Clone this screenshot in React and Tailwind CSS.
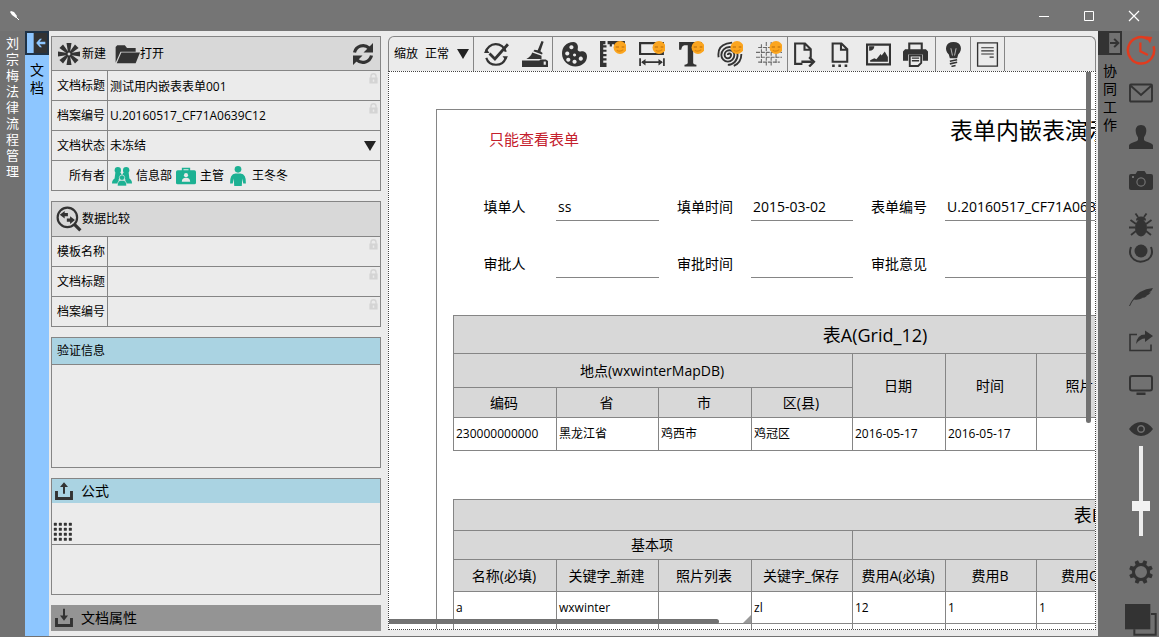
import React from 'react';

const svg = (size, children, cls = 'text-[#333]') => (
  <svg width={size} height={size} viewBox="0 0 24 24" fill="currentColor" className={`shrink-0 ${cls}`} aria-hidden="true">
    {children}
  </svg>
);
const line = { fill: 'none', stroke: 'currentColor', strokeWidth: 2 };

const Smile = () => (
  <g>
    <circle cx="18.5" cy="6" r="6" fill="#fba51f" />
    <path d="M14.500 5.500h3M20 5.500h2.500" stroke="#b56a0c" strokeWidth="1" />
    <path d="M15.500 8.500q3 2 6-.5" fill="none" stroke="#d9860f" strokeWidth="1" />
  </g>
);

const Star = () => svg(24, [0, 45, 90, 135, 180, 225, 270, 315].map((a) => (
  <path key={a} d="M11 10.500L9.500 1h5L13 10.500z" transform={`rotate(${a} 12 12)`} />
)));
const Folder = () => svg(26, <path d="M1.500 20V5.500L3 4h7l2 2.500h8V10H6zM2.500 20.500L6.800 10.700H24L20 20.500z" />);
const Refresh = () => svg(24, (
  <g>
    <path d="M3.500 10.500A8.800 8.800 0 0 1 18 6M20.500 13.500A8.800 8.800 0 0 1 6 18" fill="none" stroke="currentColor" strokeWidth="3.200" />
    <path d="M22 1v9.500h-9.500zM2 23v-9.500h9.500z" />
  </g>
));
const Compare = () => svg(26, (
  <g>
    <circle cx="10.500" cy="10.500" r="9" {...line} />
    <path d="M17 17l5.500 5.500" {...line} strokeWidth="3" />
    <path d="M3.500 8l4.500-3.500v2h3v3H8v2zM17.500 13l-4.500-3.500v2h-3v3h3v2z" />
  </g>
));
const Tray = ({ down }) => svg(20, (
  <g>
    <path d="M3 12v9h18v-9" {...line} strokeWidth="3.500" />
    {down ? <path d="M10.500 1h3v9H18l-6 7-6-7h4.500z" transform="translate(2.400 0) scale(.8 .9)" /> : <path d="M10.500 16h3V7H18l-6-6.500L6 7h4.500z" transform="translate(2.400 1) scale(.8 .9)" />}
  </g>
));
const Dots = () => svg(20, [1, 7, 13, 19].map((y) => [1, 7, 13, 19].map((x) => <rect key={`${x}-${y}`} x={x} y={y} width="3.600" height="3.600" rx=".8" />)));
const Lock = () => svg(11, <path d="M3 10h2V7a7 7 0 0 1 14 0v3h2v13H3zM8 10h8V7a4 4 0 0 0-8 0zM10.500 14v5h3v-5z" fillRule="evenodd" />, 'mt-0.5 mr-px text-[#d4d4d4]');

const green = 'text-[#1cb193]';
const Team = () => svg(20, (
  <g>
    <circle cx="7" cy="5" r="3.800" /><circle cx="17" cy="5" r="3.800" />
    <path d="M4 8h6.500L12 11l1.500-3H20l1 8h-5l-1-2H9l-1 2H3z" />
    <path d="M0 21q0-5 4-6h4v6zM24 21q0-5-4-6h-4v6z" />
    <path d="M6.500 24q-.500-7 5.500-7t5.500 7z" stroke="#e9e9e9" strokeWidth=".8" />
    <circle cx="12" cy="14" r="3.200" stroke="#e9e9e9" strokeWidth=".8" />
  </g>
), green);
const Badge = () => svg(20, (
  <g>
    <rect x="0" y="5" width="24" height="17" rx="2" />
    <path d="M8 6V3h8v3" {...line} />
    <circle cx="12" cy="11" r="2.500" fill="#e9e9e9" />
    <path d="M7 19q0-5 5-5t5 5z" fill="#e9e9e9" />
  </g>
), green);
const Person = () => svg(20, (
  <g>
    <circle cx="12" cy="4" r="4" />
    <path d="M2.500 21q-.500-11.500 6.500-12h6q7 .500 6.500 12h-3.200l-1.100-6-.700 9h-9l-.700-9-1.100 6z" />
  </g>
), green);

const Check = () => svg(26, (
  <g>
    <path d="M21 9.500a9.500 9.500 0 0 0-18.500.500M3 15a9.500 9.500 0 0 0 18 0" {...line} transform="translate(0 .500)" />
    <path d="M1 11h5l-3-4zM23 14h-5l3 4z" />
    <path d="M6 11.500l5 5L23 3" {...line} strokeWidth="2.600" />
  </g>
));
const Broom = () => svg(26, (
  <g>
    <path d="M18 0l2 .800L17 9.500l2 1.500-.500 1.500-8-3 1-1.500 3 .500zM9.500 10.500l8.500 3v3H4q4-2 5.500-6zM0 18h16l1-1h5l2 1.500V24H0zM20 19v3h2v-3z" fillRule="evenodd" />
  </g>
));
const Palette = () => svg(25, (
  <path fillRule="evenodd" d="M11 0C4 0 0 5 0 11c0 7 6 12.500 13 12.500 6 0 11-4 11-9.500 0-4-3-5.500-6-5-2 .300-3-.500-3-2 1-3-.500-7-4-7zM9 3a2 2 0 1 0 .1 0zM5 9a2 2 0 1 0 .1 0zM6 15a2 2 0 1 0 .1 0zM12 17a2 2 0 1 0 .1 0zM18 14a2 2 0 1 0 .1 0zM12 11a1.500 1.500 0 1 0 .1 0z" />
));
const Ruler = () => svg(26, (
  <g>
    <path d="M0 0h5v3H3v1h3v2H3v2h3v2H3v2h3v2H3v2h3v2H3v2h3v4H0z" />
    <path d="M7 0h16v6h-2V3h-2v3h-2V3h-2v3h-2V3h-2v2H9V3H7z" />
    <Smile />
  </g>
));
const Width = () => svg(26, (
  <g>
    <path d="M1 2h21v10H1z" {...line} />
    <path d="M1 16v7M23 16v7M3 19.500h18" {...line} strokeWidth="1.600" />
    <path d="M2 19.500l4-3v6zM22 19.500l-4-3v6z" />
    <Smile />
  </g>
));
const TypeT = () => svg(26, (
  <g><path d="M1 1h21v7h-2q-.500-3.500-3-4h-3v16q0 1.500 3 2v1.500H6V22q3-.500 3-2V4H6Q3.500 4.500 3 8H1z" /><Smile /></g>
));
const Spiral = () => svg(26, (
  <g>
    <path d="M10 13a1.500 1.500 0 0 1 3 0a3 3 0 0 1-6 0a4.500 4.500 0 0 1 9 0a6 6 0 0 1-12 0a7.500 7.500 0 0 1 15 0a9 9 0 0 1-9 9M1.500 15Q0 5 9 2.500l5-1M22.500 12q0 8-7 11" {...line} strokeWidth="1.700" />
    <Smile />
  </g>
));
const Mesh = () => svg(26, (
  <g>
    <path d="M5 3v18M9.500 1v22M14 1v22M18.500 3v18M2 6h20M0 10.500h24M0 15h24M2 19.500h20" stroke="#6b6b6b" strokeWidth="1" strokeDasharray="3.700 .8" fill="none" />
    <Smile />
  </g>
));
const DocArrow = () => svg(25, (
  <g>
    <path d="M10 21H3V1.500h9.500L18 7v8M12 2v5.500h6" {...line} />
    <path d="M9 19h10M16.500 14.500l4.500 4.500-4.500 4.500" {...line} strokeWidth="2.300" />
  </g>
));
const DocDots = () => svg(25, (
  <g>
    <path d="M3.500 19V1.500H12L17.500 7v12zM11.500 2v5.500h6" {...line} />
    <path d="M3 21.500h2.500V24H3zM9 21.500h2.500V24H9zM15 21.500h2.500V24H15z" />
  </g>
));
const Picture = () => svg(25, (
  <g>
    <path d="M1 2.500h22v19H1z" {...line} />
    <path d="M4 19v-1.500l4-2 2 1 4-5 1 1.500 3-4 3 5.500V19zM3 4h5q0 4-5 4.500z" />
  </g>
));
const Printer = () => svg(25, (
  <g>
    <path d="M6 8V1.500h12V8" {...line} />
    <path d="M2 7h20l2 2v9h-5v-6H5v6H0V9z" />
    <path d="M6.500 13h11v7l-3 3h-8z" {...line} strokeWidth="1.800" />
    <path d="M8.500 15.500h7M8.500 18h7" {...line} strokeWidth="1.300" />
  </g>
));
const Bulb = () => svg(25, (
  <g>
    <path d="M12 0c8 0 9 8 4.500 12l-1 3.500h-7l-1-3.500C3 8 4 0 12 0z" />
    <path d="M9.500 6l1.500 7M14.500 6L13 13" fill="none" stroke="#bbb" strokeWidth=".9" />
    <path d="M8.500 18.500l7-1.500M8.500 21l7-1.500M10 23.500l4-1" {...line} strokeWidth="1.500" />
  </g>
));
const Note = () => svg(25, (
  <g>
    <path d="M2.500 .800h19v22.400h-19z" {...line} strokeWidth="1.300" />
    <path d="M6 5.500h12M6 8.500h12M6 11.500h12M14 14.500h4" {...line} strokeWidth="1.100" />
  </g>
));

const Clock = () => svg(30, (
  <g>
    <path d="M17.500 3.300A10.500 10.500 0 1 0 22 9" {...line} strokeWidth="2" />
    <path d="M15.500 1l5.500.500-1.800 5z" />
    <path d="M11.500 6v7l6 3" {...line} strokeWidth="1.800" />
  </g>
), 'text-[#e23b1e]');
const Mail = () => svg(24, <path d="M1 4.500q0-1 1-1h20q1 0 1 1v15q0 1-1 1H2q-1 0-1-1zM2 5l10 9L22 5" {...line} strokeWidth="1.900" />);
const User = () => svg(24, <path d="M12 0c4 0 5.500 3 5.300 6-.3 4-1.800 5-2.300 6.500V15q.500 1 5 2.500 4 1.500 4 3V24H0v-3.500q0-1.500 4-3Q8.500 16 9 15v-2.500C8.500 11 7 10 6.700 6 6.500 3 8 0 12 0z" />);
const Camera = () => svg(24, (
  <g>
    <path fillRule="evenodd" d="M2 5h4.500l2-3h7l2 3H22q2 0 2 2v12q0 2-2 2H2q-2 0-2-2V7q0-2 2-2zM12 8.300a4.700 4.700 0 1 0 .1 0zM3 7v2h2V7z" />
    <circle cx="12" cy="13" r="3.500" />
  </g>
));
const Bug = () => svg(24, (
  <g>
    <ellipse cx="12" cy="15" rx="6" ry="8.500" /><path d="M7 7.500q0-4 5-4t5 4z" />
    <path d="M9 4L6.500 .500M15 4l2.500-3.500M7 11L1.500 7M17 11l5.500-4M6 14.500H0M18 14.500h6M7 18l-5 4M17 18l5 4" {...line} strokeWidth="1.800" />
  </g>
));
const Radio = () => svg(24, (
  <g>
    <circle cx="12" cy="10" r="6.500" />
    <path d="M2 6q-3 8 3 12.500t14 0q6-4.500 3-12.500" {...line} />
  </g>
));
const Quill = () => svg(24, <path d="M0 21Q4 12 11 7 17 3.500 24 3q-1 3-4 4.500h2q-2 2.500-5.500 3h2Q16 13 12 13h1.500q-4 2.500-8.500 1.500Q2.500 17 1 21z" />);
const Share = () => svg(24, (
  <g>
    <path d="M8 5.500H1v16h21v-6" {...line} strokeWidth="1.600" />
    <path d="M7 15q1-9.500 9-9.500V1.500L24 7l-8 6V9.500q-5 0-9 5.500z" />
  </g>
));
const Monitor = () => svg(24, (
  <g>
    <rect x="1" y="3" width="22" height="14.500" rx="2" {...line} />
    <path d="M7.500 19.500h9V22h-9z" />
  </g>
));
const Eye = () => svg(24, (
  <g>
    <path fillRule="evenodd" d="M0 12Q5 5 12 5t12 7q-5 7-12 7T0 12zM12 8a4 4 0 1 0 .1 0z" />
    <circle cx="12" cy="12" r="2.500" />
  </g>
));
const Gear = () => svg(24, (
  <g>
    <circle cx="12" cy="12" r="7.500" {...line} strokeWidth="3" />
    {[22, 67, 112, 157, 202, 247, 292, 337].map((a) => <path key={a} d="M9.700 4L10.200 0h3.600l.500 4z" transform={`rotate(${a} 12 12)`} />)}
  </g>
));
const Squares = () => svg(32, (
  <g>
    <path d="M7 19v4h16V7.500h-3.500" {...line} strokeWidth="1.500" />
    <path d="M0 0h19v19H0z" />
  </g>
));
const PanelArrow = ({ left }) => svg(20, left ? (
  <path fillRule="evenodd" d="M8 0h16v24H8zM22 10.500h-7l3-3.500h-2.500L11 12l4.500 5H18l-3-3.500h7z" />
) : (
  <g><path d="M0 0h11v24H0z" /><path d="M12 12h9M17 7l5 5-5 5" {...line} strokeWidth="2.400" /></g>
));

const Label = ({ htmlFor, children }) => (
  <label htmlFor={htmlFor} className="flex w-[55px] items-center justify-end pr-0.5">{children}</label>
);
function FieldRow({ id, label, value = '' }) {
  return (
    <div className="flex h-[30px] border-t border-[#858585]">
      <Label htmlFor={id}>{label}</Label>
      <div className="flex min-w-0 flex-1 items-start border-l border-[#858585]">
        <input id={id} defaultValue={value} readOnly className="h-full min-w-0 flex-1 bg-transparent pl-0.5 outline-none" />
        <Lock />
      </div>
    </div>
  );
}

function LeftPanel() {
  return (
    <aside className="flex w-[339px] shrink-0 flex-col gap-2.5 pt-[5px] pr-[7px] pl-0.5 text-xs">
      <section className="border border-[#858585]">
        <div className="flex h-[33px] items-center bg-[#d8d8d8] pr-[5px] pl-[5px]">
          <button className="flex items-center gap-px"><Star />新建</button>
          <button className="ml-2 flex items-center"><Folder />打开</button>
          <button className="ml-auto" aria-label="刷新"><Refresh /></button>
        </div>
        <FieldRow id="title" label="文档标题" value="测试用内嵌表表单001" />
        <FieldRow id="number" label="档案编号" value="U.20160517_CF71A0639C12" />
        <div className="flex h-[30px] border-t border-[#858585]">
          <Label htmlFor="state">文档状态</Label>
          <div className="relative flex flex-1 items-center border-l border-[#858585]">
            <select id="state" className="h-full w-full appearance-none bg-transparent pl-0.5 outline-none"><option>未冻结</option></select>
            <svg width="12" height="10" viewBox="0 0 12 10" className="pointer-events-none absolute right-1"><path d="M0 0h12L6 10z" fill="#222" /></svg>
          </div>
        </div>
        <div className="flex h-[30px] border-t border-[#858585]">
          <div className="flex w-[55px] items-center justify-end pr-0.5">所有者</div>
          <div className="flex flex-1 items-center gap-1 border-l border-[#858585] pl-1">
            <Team /><span>信息部</span><Badge /><span>主管</span><Person /><span>王冬冬</span>
          </div>
        </div>
      </section>

      <section className="border border-[#858585]">
        <button className="flex h-[34px] w-full items-center bg-[#d8d8d8] pl-1"><Compare />数据比较</button>
        <FieldRow id="tpl" label="模板名称" />
        <FieldRow id="title2" label="文档标题" />
        <FieldRow id="number2" label="档案编号" />
      </section>

      <section className="border border-[#858585]">
        <h2 className="flex h-[26px] items-center bg-[#aad3e2] pl-[5px]">验证信息</h2>
        <div className="h-[103px] border-t border-[#858585]" />
      </section>

      <section className="border border-[#858585]">
        <h2 className="flex h-6 items-center gap-[7px] bg-[#aad3e2] pl-0.5 text-sm"><Tray />公式</h2>
        <div className="flex h-[41px] items-end pb-0.5 pl-px"><button aria-label="公式列表"><Dots /></button></div>
        <div className="h-[50px] border-t border-[#858585]" />
      </section>

      <section className="shrink-0">
        <button className="flex h-[26px] w-full items-center gap-[7px] bg-[#949494] pl-[3px] text-sm"><Tray down />文档属性</button>
      </section>
    </aside>
  );
}

const Tool = ({ label, icon: Icon }) => (
  <button aria-label={label} title={label} className="flex items-center justify-center"><Icon /></button>
);
function Toolbar() {
  return (
    <div className="flex h-[35px] shrink-0 rounded-t-md border border-b-0 border-[#858585] text-xs">
      <div className="relative flex w-[85px] items-center border-r border-[#858585] pl-[5px]">
        <label htmlFor="zoom" className="w-[31px] shrink-0">缩放</label>
        <select id="zoom" className="h-full w-full appearance-none bg-transparent outline-none"><option>正常</option></select>
        <svg width="12" height="10" viewBox="0 0 12 10" className="pointer-events-none absolute right-1"><path d="M0 0h12L6 10z" fill="#222" /></svg>
      </div>
      <div className="flex w-[79px] items-center gap-[13px] border-r border-[#858585] pl-[9px]">
        <Tool label="检查" icon={Check} /><Tool label="清理" icon={Broom} />
      </div>
      <div className="flex w-[235px] items-center gap-[13px] border-r border-[#858585] pl-[9px]">
        <Tool label="颜色" icon={Palette} /><Tool label="标尺" icon={Ruler} /><Tool label="宽度" icon={Width} />
        <Tool label="文字" icon={TypeT} /><Tool label="螺旋" icon={Spiral} /><Tool label="网格" icon={Mesh} />
      </div>
      <div className="flex w-[148px] items-center gap-3 border-r border-[#858585] pl-1">
        <Tool label="导出" icon={DocArrow} /><Tool label="文件" icon={DocDots} /><Tool label="图片" icon={Picture} /><Tool label="打印" icon={Printer} />
      </div>
      <div className="flex w-[35px] items-center justify-center border-r border-[#858585]"><Tool label="提示" icon={Bulb} /></div>
      <div className="flex w-[34px] items-center justify-center border-r border-[#858585]"><Tool label="便笺" icon={Note} /></div>
    </div>
  );
}

function FormField({ id, label, value = '' }) {
  return (
    <>
      <label htmlFor={id} className="text-center leading-7">{label}</label>
      <input id={id} defaultValue={value} className="h-7 w-full border-b border-[#858585] bg-transparent pl-0.5 outline-none" />
    </>
  );
}
const Cols = ({ last }) => (
  <colgroup>
    <col className="w-[103px]" /><col className="w-[102px]" /><col className="w-[93px]" /><col className="w-[101px]" />
    <col className="w-[93px]" /><col className="w-[91px]" /><col className="w-[88px]" /><col className={last} />
  </colgroup>
);
const Th = ({ children, className = '', ...rest }) => (
  <th className={`border border-[#858585] p-0 pr-0.5 font-normal ${className}`} {...rest}>{children}</th>
);
const Td = ({ children }) => <td className="relative border border-[#858585] bg-white p-0 pl-0.5 text-xs">{children}</td>;

function FormPage() {
  return (
    <div className="mt-[37px] ml-[47px] min-h-[1000px] w-[1420px] border-t border-l border-[#858585] pl-4 text-sm">
      <div className="flex h-[78px] items-start">
        <p className="w-[497px] pt-[19px] pl-9 text-[15px] leading-5 text-[#c4202c]">只能查看表单</p>
        <h1 className="pt-1 text-[23px] leading-8">表单内嵌表演示</h1>
      </div>
      <div className="grid h-[90px] grid-cols-[103px_103px_92px_102px_92px_240px] grid-rows-[33px_57px] items-end">
        <FormField id="f1" label="填单人" value="ss" />
        <FormField id="f2" label="填单时间" value="2015-03-02" />
        <FormField id="f3" label="表单编号" value="U.20160517_CF71A0639C12" />
        <FormField id="f4" label="审批人" />
        <FormField id="f5" label="审批时间" />
        <FormField id="f6" label="审批意见" />
      </div>
      <table className="mt-[37px] w-[845px] table-fixed border-collapse">
        <Cols last="w-[174px]" />
        <thead className="bg-[#d8d8d8]">
          <tr className="h-[38px]"><Th colSpan={8} className="text-lg">表A(Grid_12)</Th></tr>
          <tr className="h-[34px]">
            <Th colSpan={4}>地点(wxwinterMapDB)</Th>
            <Th rowSpan={2}>日期</Th><Th rowSpan={2}>时间</Th><Th rowSpan={2}>照片</Th><Th rowSpan={2} />
          </tr>
          <tr className="h-[30px]"><Th>编码</Th><Th>省</Th><Th>市</Th><Th>区(县)</Th></tr>
        </thead>
        <tbody>
          <tr className="h-[33px]">
            <Td>230000000000</Td><Td>黑龙江省</Td><Td>鸡西市</Td><Td>鸡冠区</Td><Td>2016-05-17</Td><Td>2016-05-17</Td><Td /><Td />
          </tr>
        </tbody>
      </table>
      <table className="mt-12 w-[1272px] table-fixed border-collapse">
        <Cols last="w-[601px]" />
        <thead className="bg-[#d8d8d8]">
          <tr className="h-[31px]"><Th colSpan={8} className="text-lg">表B</Th></tr>
          <tr className="h-[29px]"><Th colSpan={4}>基本项</Th><Th colSpan={4} /></tr>
          <tr className="h-8">
            <Th>名称(必填)</Th><Th>关键字_新建</Th><Th>照片列表</Th><Th>关键字_保存</Th><Th>费用A(必填)</Th><Th>费用B</Th><Th>费用C</Th><Th />
          </tr>
        </thead>
        <tbody>
          <tr className="h-8">
            <Td>a</Td><Td>wxwinter</Td>
            <Td><svg width="8" height="8" viewBox="0 0 8 8" className="absolute right-0 bottom-0"><path d="M8 0v8H0z" fill="#999" /></svg></Td>
            <Td>zl</Td><Td>12</Td><Td>1</Td><Td>1</Td><Td />
          </tr>
          <tr className="h-8"><Td /><Td /><Td /><Td /><Td /><Td /><Td /><Td /></tr>
        </tbody>
      </table>
    </div>
  );
}

const vertical = (text) => [...text].map((c, i) => <span key={i} className="block">{c}</span>);

export default function App() {
  return (
    <div className="flex h-screen flex-col overflow-hidden bg-[#717171] font-['Open_Sans','Noto_Sans_CJK_SC',sans-serif] text-black">
      <header className="flex h-[31px] shrink-0 items-center bg-[#757575] pr-[3px] pl-2.5">
        <svg width="10" height="10" viewBox="0 0 10 10"><path d="M1 0l3 1 3 4-1 2-4-3-2-3z" fill="#fff" /><path d="M6 6l3 3" stroke="#fff" /></svg>
        <div className="ml-auto flex">
          <button aria-label="最小化" className="flex h-7 w-[45px] items-center justify-center"><svg width="12" height="12"><path d="M1 6.500h10" stroke="#fff" /></svg></button>
          <button aria-label="最大化" className="flex h-7 w-[45px] items-center justify-center"><svg width="12" height="12"><path d="M1.500 1.500h9v9h-9z" stroke="#fff" fill="none" /></svg></button>
          <button aria-label="关闭" className="flex h-7 w-[45px] items-center justify-center"><svg width="12" height="12"><path d="M1 1l10 10M11 1L1 11" stroke="#fff" strokeWidth="1.200" /></svg></button>
        </div>
      </header>

      <div className="flex min-h-0 flex-1 border-b border-[#717171]">
        <div className="w-[25px] shrink-0 pt-1 text-center text-[13px] leading-4 text-white">{vertical('刘宗梅法律流程管理')}</div>
        <nav className="flex w-6 shrink-0 flex-col items-center bg-[#8dc6ff]">
          <button aria-label="收起" className="flex h-6 w-6 items-center justify-center border-2 border-[#1f3347]"><PanelArrow left /></button>
          <button className="pt-1.5 text-sm leading-[18px]">{vertical('文档')}</button>
        </nav>

        <div className="flex min-w-0 flex-1 bg-[#ebebeb]">
          <LeftPanel />
          <main className="flex min-w-0 flex-1 flex-col pt-[5px] pr-0.5 pb-1.5">
            <Toolbar />
            <div className="relative min-h-0 flex-1 overflow-hidden border border-dotted border-[#444] bg-white">
              <FormPage />
              <div className="absolute top-0 right-1 h-[351px] w-[5px] rounded-b bg-[#717171]" />
              <div className="absolute bottom-[5px] left-0 h-[5px] w-[330px] rounded-r bg-[#717171]" />
            </div>
          </main>
        </div>

        <nav className="flex w-6 shrink-0 flex-col items-center">
          <button aria-label="展开" className="flex h-6 w-6 items-center justify-center border-2 border-[#333]"><PanelArrow /></button>
          <button className="pt-[7px] text-sm leading-[18px]">{vertical('协同工作')}</button>
        </nav>
        <nav className="flex w-[37px] shrink-0 flex-col items-center gap-5 pt-1">
          <button aria-label="时钟" className="h-[30px]"><Clock /></button>
          <button aria-label="邮件" className="-mt-1 h-6"><Mail /></button>
          <button aria-label="用户" className="h-6"><User /></button>
          <button aria-label="相机" className="h-6"><Camera /></button>
          <div className="flex flex-col gap-1">
            <button aria-label="调试" className="h-6"><Bug /></button>
            <button aria-label="录制" className="h-6"><Radio /></button>
          </div>
          <button aria-label="笔" className="h-6"><Quill /></button>
          <button aria-label="分享" className="h-6"><Share /></button>
          <button aria-label="屏幕" className="h-6"><Monitor /></button>
          <div className="flex flex-col items-center gap-[5px]">
            <button aria-label="查看" className="h-6"><Eye /></button>
            <input
              type="range" aria-label="透明度" defaultValue="31"
              className="h-[90px] w-[18px] appearance-none bg-[linear-gradient(#ededed,#ededed)] bg-[length:4px_100%] bg-center bg-no-repeat [direction:rtl] [writing-mode:vertical-lr] [&::-webkit-slider-thumb]:h-[10px] [&::-webkit-slider-thumb]:w-[18px] [&::-webkit-slider-thumb]:appearance-none [&::-webkit-slider-thumb]:bg-[#f2f2f2]"
            />
          </div>
          <button aria-label="设置" className="mt-1 h-6"><Gear /></button>
          <button aria-label="窗口" className="h-8"><Squares /></button>
        </nav>
      </div>
    </div>
  );
}
